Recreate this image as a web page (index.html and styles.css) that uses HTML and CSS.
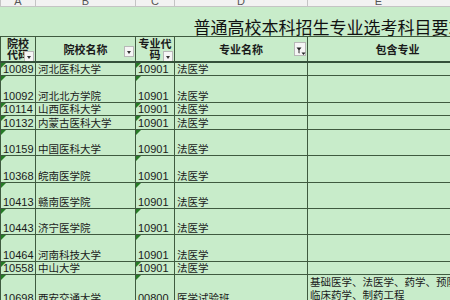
FILE: index.html
```html
<!DOCTYPE html>
<html lang="zh">
<head>
<meta charset="utf-8">
<link rel="stylesheet" href="styles.css">
</head>
<body>
<table class="sheet">
  <colgroup>
    <col class="c-a"><col class="c-b"><col class="c-c"><col class="c-d"><col class="c-e">
  </colgroup>
  <tr class="r-letters">
    <th><div class="clip"><span>A</span></div></th>
    <th><div class="clip"><span>B</span></div></th>
    <th><div class="clip"><span>C</span></div></th>
    <th><div class="clip"><span>D</span></div></th>
    <th class="letter-e"><div class="clip"><span>E</span></div></th>
  </tr>
  <tr class="r-title">
    <td colspan="5"><div class="title-box">普通高校本科招生专业选考科目要求</div></td>
  </tr>
  <tr class="r-head">
    <th><div class="hcell">院校<br>代码<span class="fbtn"></span></div></th>
    <th><div class="hcell">院校名称<span class="fbtn"></span></div></th>
    <th><div class="hcell">专业代<br>码<span class="fbtn"></span></div></th>
    <th><div class="hcell">专业名称<span class="fbtn active"><svg width="11" height="13" viewBox="0 0 11 13"><path d="M1.5 4.5h5l-2 2.5v3.5l-1-0.6v-2.9z" fill="#222"/><path d="M6.5 9.5h4l-2 2.5z" fill="#222"/></svg></span></div></th>
    <th><div class="hcell">包含专业</div></th>
  </tr>
  <tr class="r-s"><td class="num tri">10089</td><td class="txt">河北医科大学</td><td class="num tri">10901</td><td class="txt">法医学</td><td></td></tr>
  <tr class="r-l"><td class="num tri">10092</td><td class="txt">河北北方学院</td><td class="num tri">10901</td><td class="txt">法医学</td><td></td></tr>
  <tr class="r-s"><td class="num tri">10114</td><td class="txt">山西医科大学</td><td class="num tri">10901</td><td class="txt">法医学</td><td></td></tr>
  <tr class="r-m"><td class="num tri">10132</td><td class="txt">内蒙古医科大学</td><td class="num tri">10901</td><td class="txt">法医学</td><td></td></tr>
  <tr class="r-l2"><td class="num tri">10159</td><td class="txt">中国医科大学</td><td class="num tri">10901</td><td class="txt">法医学</td><td></td></tr>
  <tr class="r-l"><td class="num tri">10368</td><td class="txt">皖南医学院</td><td class="num tri">10901</td><td class="txt">法医学</td><td></td></tr>
  <tr class="r-l2"><td class="num tri">10413</td><td class="txt">赣南医学院</td><td class="num tri">10901</td><td class="txt">法医学</td><td></td></tr>
  <tr class="r-l2"><td class="num tri">10443</td><td class="txt">济宁医学院</td><td class="num tri">10901</td><td class="txt">法医学</td><td></td></tr>
  <tr class="r-l"><td class="num tri">10464</td><td class="txt">河南科技大学</td><td class="num tri">10901</td><td class="txt">法医学</td><td></td></tr>
  <tr class="r-s"><td class="num tri">10558</td><td class="txt">中山大学</td><td class="num tri">10901</td><td class="txt">法医学</td><td></td></tr>
  <tr class="r-x"><td class="num tri">10698</td><td class="txt">西安交通大学</td><td class="num tri">00800</td><td class="txt">医学试验班</td><td class="txt wrap">基础医学、法医学、药学、预防医学、<br>临床药学、制药工程</td></tr>
</table>
</body>
</html>
```

FILE: styles.css
```css
html, body {
  margin: 0;
  padding: 0;
  width: 450px;
  height: 300px;
  overflow: hidden;
  background: #c8ecca;
}

.sheet {
  border-collapse: collapse;
  table-layout: fixed;
  width: 487px;
  font-family: "Liberation Sans", "Noto Sans CJK SC", sans-serif;
  color: #1a1a1a;
  background: #c8ecca;
}

.c-a { width: 35px; }
.c-b { width: 100px; }
.c-c { width: 39px; }
.c-d { width: 133px; }
.c-e { width: 180px; }

.sheet td, .sheet th {
  border: 1px solid #3f5a3f;
  padding: 0 2px;
  overflow: hidden;
  white-space: nowrap;
}

/* column letters */
.sheet .r-letters th {
  background: #f2f2f2;
  border: 1px solid #c4c4c4;
  border-top: none;
  padding: 0;
  height: 6px;
  font-weight: normal;
  font-size: 11px;
  color: #555;
}
.clip {
  height: 6px;
  overflow: hidden;
}
.clip span {
  display: block;
  margin-top: -5px;
  line-height: 12px;
  text-align: center;
}
.letter-e .clip span { padding-right: 38px; }

/* title */
.sheet .r-title td {
  border-left: none;
  border-right: none;
  border-top: 1px solid #c4c4c4;
  padding: 0;
}
.title-box {
  height: 29px;
  box-sizing: border-box;
  padding: 11px 0 0 193px;
  font-family: "Noto Sans CJK SC", sans-serif;
  font-size: 17px;
  line-height: 17px;
  color: #111;
}

/* header */
.sheet .r-head th {
  height: 24px;
  padding: 0;
  vertical-align: middle;
  border-bottom: 2px solid #34503a;
}
.hcell {
  position: relative;
  font-family: "Noto Sans CJK SC", sans-serif;
  font-weight: bold;
  font-size: 11px;
  line-height: 11px;
  text-align: center;
  color: #1a1a1a;
}
.fbtn {
  position: absolute;
  right: 1px;
  bottom: -2px;
  width: 10px;
  height: 11px;
  background: #f6f6f6;
  border: 1px solid #b8b8b8;
  box-sizing: border-box;
}
.fbtn::after {
  content: "";
  position: absolute;
  left: 2px;
  top: 4px;
  border-left: 2.5px solid transparent;
  border-right: 2.5px solid transparent;
  border-top: 3px solid #333;
}
.fbtn.active {
  width: 12px;
  height: 14px;
  bottom: -1px;
}
.fbtn.active::after { display: none; }
.fbtn svg { display: block; }

/* data */
.sheet tr td.num, .sheet tr td.txt {
  vertical-align: bottom;
  line-height: 12px;
}
.num {
  font-size: 11px;
  position: relative;
}
.txt {
  font-size: 10.5px;
}
.sheet tr td.wrap {
  vertical-align: top;
  padding-top: 1px;
  line-height: 13px;
}
.tri::before {
  content: "";
  position: absolute;
  left: 0;
  top: 0;
  border-top: 5px solid #267a26;
  border-right: 5px solid transparent;
}

.r-s td { height: 12px; }
.r-m td { height: 13px; }
.r-l td { height: 26px; }
.r-l2 td { height: 25px; }
.r-x td { height: 28px; }
```
